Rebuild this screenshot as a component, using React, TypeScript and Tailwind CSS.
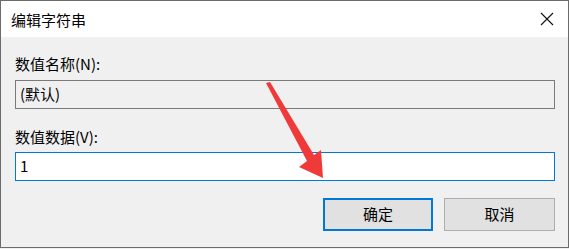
const font = { fontFamily: '"Noto Sans CJK SC", "Microsoft YaHei", sans-serif' };

const CloseIcon = () => (
  <svg width="14" height="14" viewBox="0 0 14 14" className="block">
    <path d="M1 1 L13 13 M13 1 L1 13" stroke="#111" strokeWidth="1.1" fill="none" />
  </svg>
);

const Arrow = () => (
  <svg
    className="pointer-events-none absolute left-0 top-0"
    width="569"
    height="249"
    viewBox="0 0 569 249"
  >
    <polygon
      points="266,83 270,82 314,155 321,150 323,178 299,167 307,161"
      fill="#f03a3a"
    />
  </svg>
);

export default function App() {
  return (
    <div className="relative h-[249px] w-[569px] overflow-hidden bg-[#f0f0f0]" style={font}>
      <div className="flex h-[248px] w-[569px] flex-col border border-[#6b6b6b] bg-[#f0f0f0]">
        {/* title bar */}
        <div className="flex h-[36px] shrink-0 items-center justify-between bg-white pl-[10px] pr-[14px]">
          <span className="text-[15px] leading-none text-black">编辑字符串</span>
          <CloseIcon />
        </div>

        {/* body */}
        <div className="flex flex-col pl-[14px] pr-[13px] pt-[17px] text-[15px] text-black">
          <label className="h-[20px] leading-[20px]">数值名称(N):</label>
          <div className="mt-[6px] flex h-[29px] items-center border border-[#7a7a7a] bg-[#f0f0f0] pl-[4px]">
            (默认)
          </div>

          <label className="mt-[18px] h-[20px] leading-[20px]">数值数据(V):</label>
          <div className="mt-[5px] flex h-[29px] items-center border border-[#0078d7] bg-white pl-[4px]">
            1
          </div>

          <div className="mt-[17px] flex justify-end gap-[11px]">
            <button className="flex h-[33px] w-[110px] items-center justify-center border-2 border-[#0078d7] bg-[#e1e1e1]">
              确定
            </button>
            <button className="flex h-[33px] w-[111px] items-center justify-center border border-[#adadad] bg-[#e1e1e1]">
              取消
            </button>
          </div>
        </div>
      </div>
      <Arrow />
    </div>
  );
}
